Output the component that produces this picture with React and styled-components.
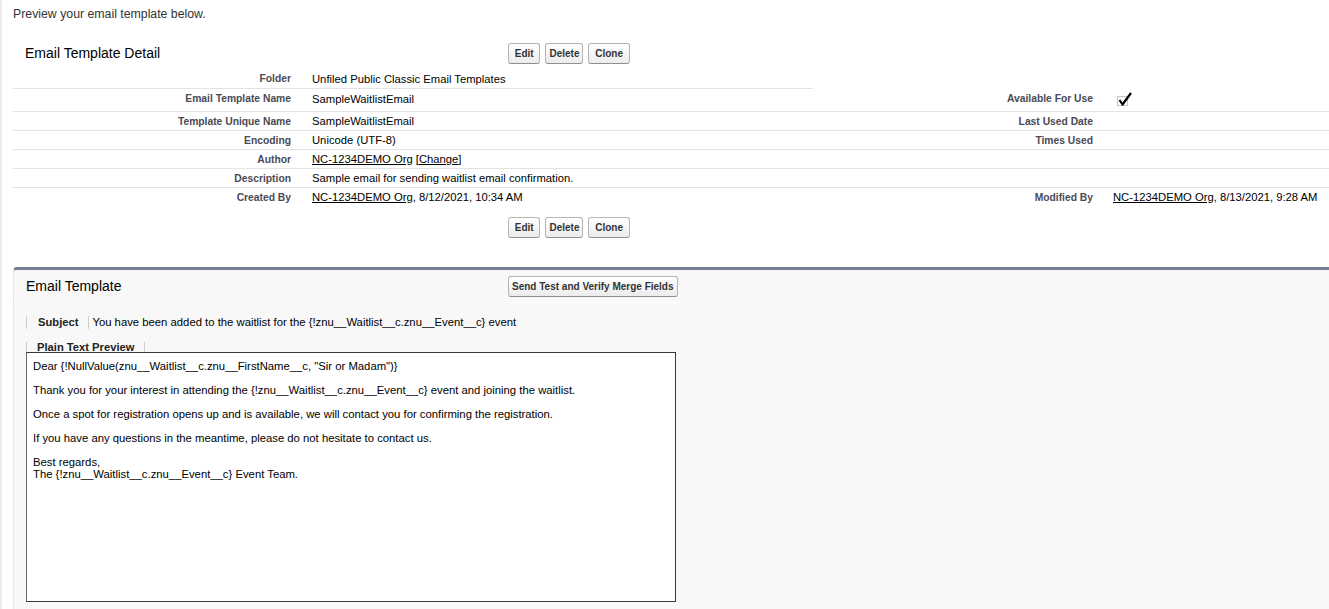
import React from 'react'
import styled, { createGlobalStyle } from 'styled-components'

// page wide defaults
const GlobalStyle = createGlobalStyle`
  body {
    margin: 0;
    background: #fff;
    font-family: "Liberation Sans", Arial, sans-serif;
    overflow: hidden;
  }
`

const Page = styled.div`
  min-height: 609px;
  box-sizing: border-box;
  border-left: 2px solid #ececec;
  padding: 7px 0 0 11px;
`

const Intro = styled.div`
  font-size: 12.3px;
  line-height: 14px;
  color: #333;
`

const DetailBlock = styled.div`
  margin-top: 16px;
`

const BlockHeader = styled.div`
  display: grid;
  grid-template-columns: ${p => p.$titleWidth}px 1fr;
  align-items: center;
  height: ${p => p.$h}px;
`

const Title = styled.h2`
  margin: 0;
  padding-left: 12px;
  font-size: 14px;
  font-weight: normal;
  color: #000;
`

const Buttons = styled.div`
  display: flex;
  gap: 5px;
`

const BottomButtons = styled(Buttons)`
  padding: 10px 0 0 495px;
`

const Btn = styled.button`
  height: 21px;
  padding: 0 3px;
  font-family: "Liberation Sans", Arial, sans-serif;
  font-size: 10px;
  font-weight: bold;
  color: #333;
  white-space: pre;
  border: 1px solid #b5b5b5;
  border-bottom-color: #8f8f8f;
  border-radius: 3px;
  background: linear-gradient(#ffffff, #ececec);
  cursor: pointer;
`

const Grid = styled.div`
  display: grid;
  grid-template-columns: 288px 512px 290px 1fr;
`

const Cell = styled.div`
  box-sizing: border-box;
  height: ${p => p.$h + 1}px;
  padding-bottom: ${p => p.$lift}px;
  display: flex;
  align-items: center;
  border-bottom: 1px solid ${p => (p.$line ? '#e3e3e3' : 'transparent')};
`

const Label = styled(Cell)`
  justify-content: flex-end;
  padding-right: 10px;
  font-size: 10.3px;
  font-weight: bold;
  color: #4a4a56;
  white-space: nowrap;
`

const Value = styled(Cell)`
  padding-left: ${p => p.$pad}px;
  font-size: 11.25px;
  color: #000;
  white-space: nowrap;
`

const Link = styled.a`
  color: #000;
  text-decoration: underline;
  cursor: pointer;
`

const Section = styled.div`
  margin-top: 29px;
  background: #f8f8f8;
  border-top: 3px solid #747e96;
  border-left: 1px solid #e8e8e8;
  border-radius: 4px 0 0 0;
  padding-bottom: 20px;
`

const SectionHeader = styled(BlockHeader)`
  border-bottom: 1px solid #fdfdfd;
`

const SubjectRow = styled.div`
  display: flex;
  align-items: center;
  height: 13px;
  margin: 13px 0 0 12px;
`

const FieldTag = styled.span`
  border-left: 1px solid #cfcfcf;
  padding: 0 ${p => p.$right}px 0 ${p => p.$left}px;
  font-size: 11.2px;
  font-weight: bold;
  color: #222;
  line-height: 13px;
  white-space: nowrap;
`

const SubjectText = styled.span`
  border-left: 1px solid #cfcfcf;
  padding-left: 3px;
  font-size: 11.3px;
  line-height: 13px;
  color: #000;
`

const TabRow = styled.div`
  display: flex;
  height: 10px;
  margin: 13px 0 0 12px;
  align-items: flex-end;
`

const Tab = styled(FieldTag)`
  border-right: 1px solid #cfcfcf;
  line-height: 10px;
  height: 10px;
`

const PreviewBox = styled.div`
  box-sizing: border-box;
  width: 650px;
  height: 250px;
  margin-left: 12px;
  padding: 7px 6px;
  background: #fff;
  border: 1px solid #3a3a3a;
  border-left-color: #6a6a6a;
  font-size: 11.3px;
  line-height: 12px;
  color: #000;
  white-space: pre-wrap;
`

const CheckMark = () => (
  <svg width="18" height="16" viewBox="0 0 18 16" style={{ marginLeft: 3 }}>
    <rect x="1.5" y="5.5" width="10" height="9" fill="none" stroke="#8a8a8a" strokeDasharray="1 1" />
    <path d="M3.5 9 L6.5 13.5 L15 2" stroke="#000" strokeWidth="2.2" fill="none" strokeLinejoin="round" />
  </svg>
)

const rows = [
  { label: 'Folder', value: 'Unfiled Public Classic Email Templates', h: 19, line: 'half' },
  { label: 'Email Template Name', value: 'SampleWaitlistEmail', label2: 'Available For Use', value2: <CheckMark />, h: 22, lift: 3, line: 'full' },
  { label: 'Template Unique Name', value: 'SampleWaitlistEmail', label2: 'Last Used Date', h: 18, line: 'full' },
  { label: 'Encoding', value: 'Unicode (UTF-8)', label2: 'Times Used', h: 18, line: 'full' },
  { label: 'Author', value: <span><Link>NC-1234DEMO Org</Link> [<Link>Change</Link>]</span>, h: 18, line: 'full' },
  { label: 'Description', value: 'Sample email for sending waitlist email confirmation.', h: 18, line: 'full' },
  {
    label: 'Created By',
    value: <span><Link>NC-1234DEMO Org</Link>, 8/12/2021, 10:34 AM</span>,
    label2: 'Modified By',
    value2: <span><Link>NC-1234DEMO Org</Link>, 8/13/2021, 9:28 AM</span>,
    h: 18,
    line: 'none',
  },
]

const body = `Dear {!NullValue(znu__Waitlist__c.znu__FirstName__c, "Sir or Madam")}

Thank you for your interest in attending the {!znu__Waitlist__c.znu__Event__c} event and joining the waitlist.

Once a spot for registration opens up and is available, we will contact you for confirming the registration.

If you have any questions in the meantime, please do not hesitate to contact us.

Best regards,
The {!znu__Waitlist__c.znu__Event__c} Event Team.`

const DetailButtons = () => (
  <>
    <Btn>{'\u00a0Edit\u00a0'}</Btn>
    <Btn>Delete</Btn>
    <Btn>{'\u00a0Clone\u00a0'}</Btn>
  </>
)

export default function App() {
  return (
    <Page>
      <GlobalStyle />
      <Intro>Preview your email template below.</Intro>

      <DetailBlock>
        <BlockHeader $titleWidth={495} $h={32}>
          <Title>Email Template Detail</Title>
          <Buttons><DetailButtons /></Buttons>
        </BlockHeader>

        <Grid>
          {rows.map(r => (
            <React.Fragment key={r.label}>
              <Label $h={r.h} $lift={r.lift || 0} $line={r.line !== 'none'}>{r.label}</Label>
              <Value $h={r.h} $lift={r.lift || 0} $pad={11} $line={r.line !== 'none'}>{r.value}</Value>
              <Label $h={r.h} $lift={r.lift || 0} $line={r.line === 'full'}>{r.label2}</Label>
              <Value $h={r.h} $lift={r.lift || 0} $pad={10} $line={r.line === 'full'}>{r.value2}</Value>
            </React.Fragment>
          ))}
        </Grid>

        <BottomButtons><DetailButtons /></BottomButtons>
      </DetailBlock>

      <Section>
        <SectionHeader $titleWidth={494} $h={32}>
          <Title>Email Template</Title>
          <Buttons><Btn>Send Test and Verify Merge Fields</Btn></Buttons>
        </SectionHeader>

        <SubjectRow>
          <FieldTag $left={11} $right={10}>Subject</FieldTag>
          <SubjectText>You have been added to the waitlist for the {'{!znu__Waitlist__c.znu__Event__c}'} event</SubjectText>
        </SubjectRow>

        <TabRow>
          <Tab $left={10} $right={10}>Plain Text Preview</Tab>
        </TabRow>

        <PreviewBox>{body}</PreviewBox>
      </Section>
    </Page>
  )
}
